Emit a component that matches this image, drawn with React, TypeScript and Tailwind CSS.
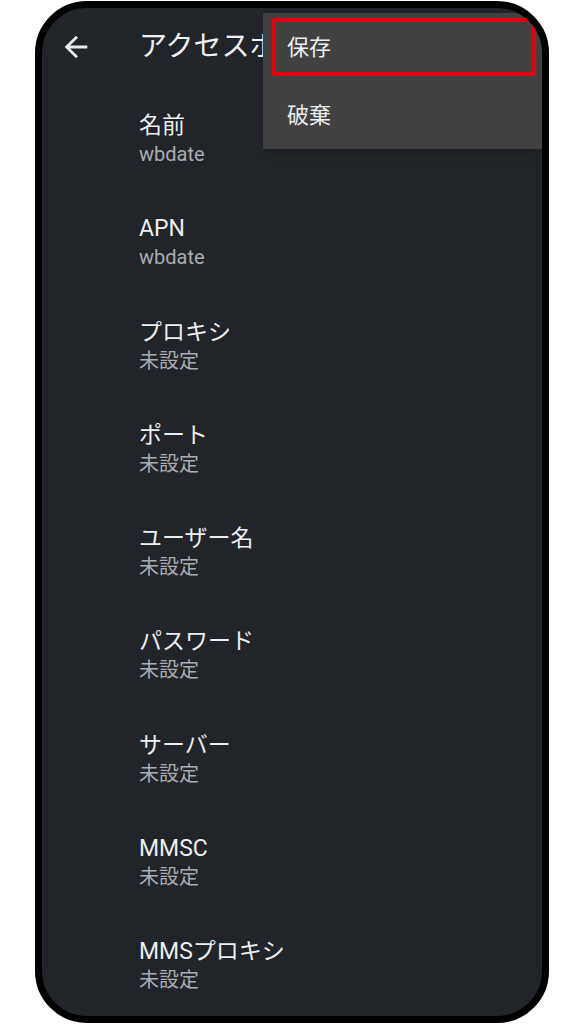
const FONT = { fontFamily: 'Roboto, "Noto Sans CJK JP", sans-serif' };

const items = [
  { label: "名前", value: "wbdate" },
  { label: "APN", value: "wbdate" },
  { label: "プロキシ", value: "未設定" },
  { label: "ポート", value: "未設定" },
  { label: "ユーザー名", value: "未設定" },
  { label: "パスワード", value: "未設定" },
  { label: "サーバー", value: "未設定" },
  { label: "MMSC", value: "未設定" },
  { label: "MMSプロキシ", value: "未設定" },
];

export default function App() {
  return (
    <div className="w-[576px] h-[1024px] bg-white pt-[1px] pl-[35px]" style={FONT}>
      <div className="relative w-[514px] h-[1022px] border-[7px] border-black rounded-[52px] bg-[#212428] overflow-hidden">
        {/* header */}
        <div className="h-[78px] flex items-center whitespace-nowrap">
          <svg viewBox="0 0 24 24" className="w-[34px] h-[34px] ml-[17px] fill-[#e8eaed]">
            <path d="M20 11H7.83l5.59-5.59L12 4l-8 8 8 8 1.41-1.41L7.83 13H20v-2z" />
          </svg>
          {/* title runs under the menu, clip it at the menu edge */}
          <div className="ml-[46px] w-[124px] overflow-hidden text-[28px] text-[#eef0f2]">アクセスポイントの編集</div>
        </div>

        {/* list */}
        {items.map((it, i) => (
          <div key={i} className="h-[103.25px] pt-[25px] pl-[97px]">
            <div className="text-[23px] leading-[30px] text-[#eceef0]">{it.label}</div>
            <div className="text-[20px] leading-[26px] text-[#a9acb0]">{it.value}</div>
          </div>
        ))}

        {/* overflow menu */}
        <div className="absolute left-[221px] top-[5px] right-0 h-[136px] bg-[#414141] shadow-lg">
          <div className="h-[68px] flex items-center pl-[24px] text-[22px] text-[#eceef0]">保存</div>
          <div className="h-[68px] flex items-center pl-[24px] text-[22px] text-[#eceef0]">破棄</div>
          <div className="absolute left-[9px] top-[5px] right-[6px] h-[58px] border-[4px] border-[#e60012] rounded-[2px]"></div>
        </div>
      </div>
    </div>
  );
}
